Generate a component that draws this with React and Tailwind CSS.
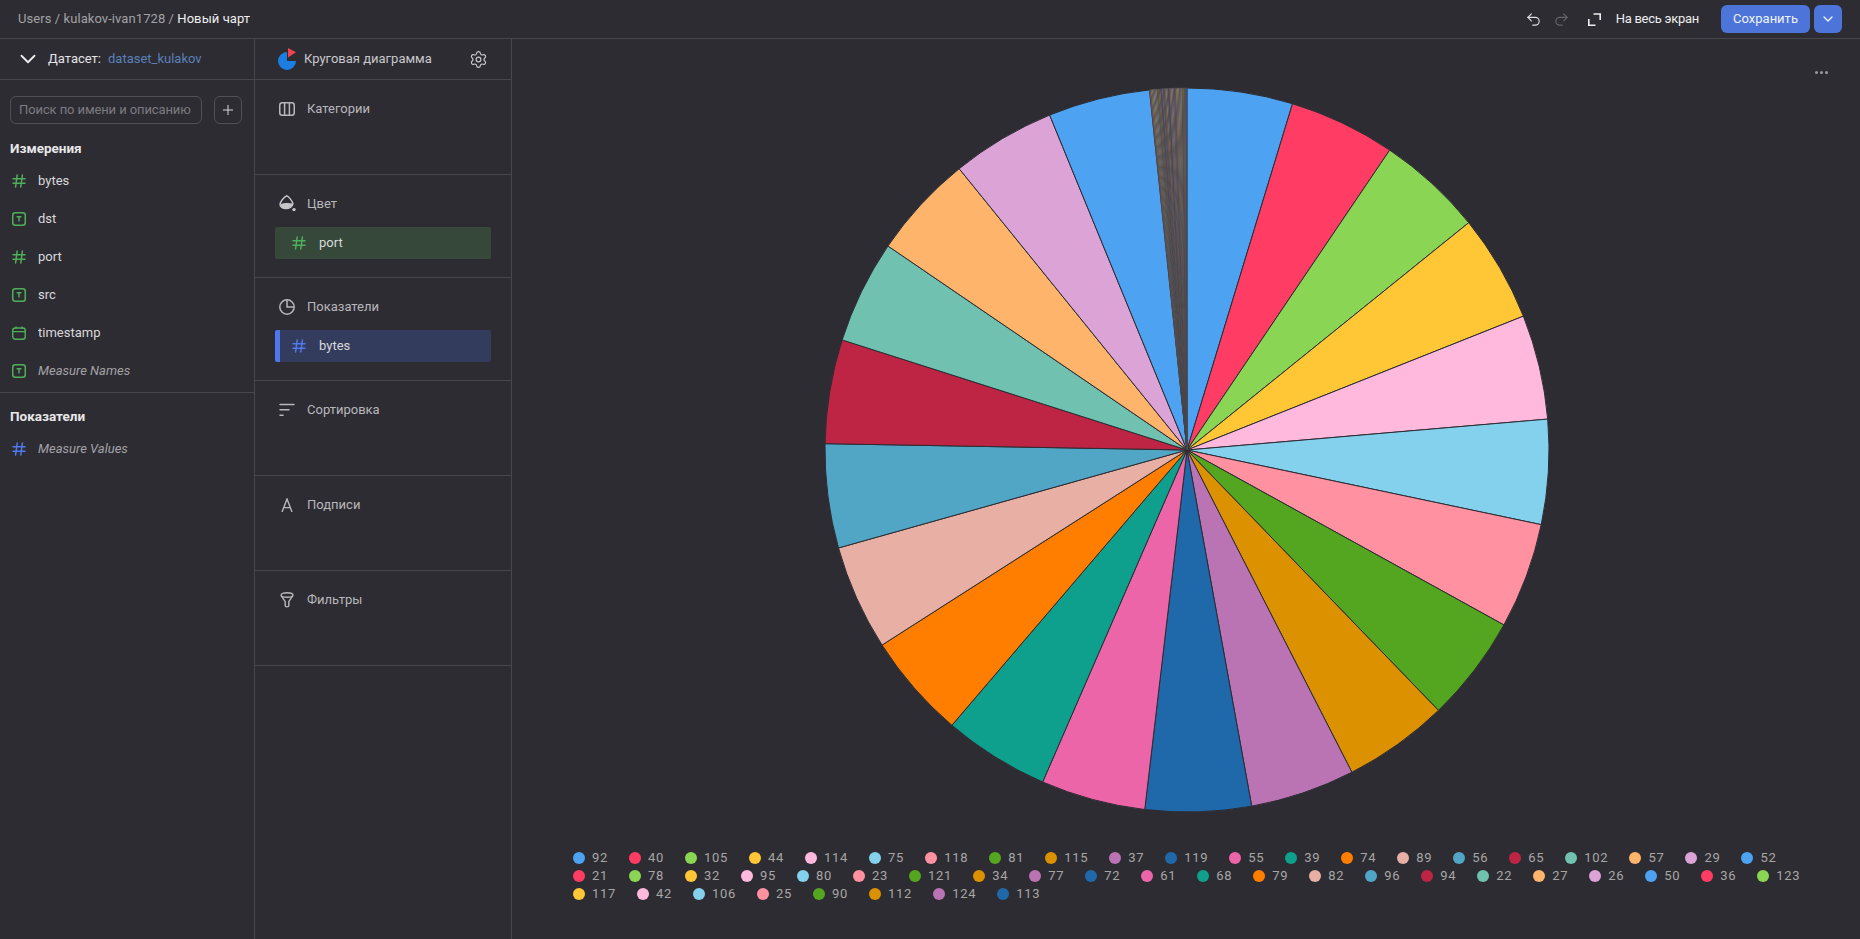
import React from "react";
import { ChevronDown, Plus, Redo2, Settings, Undo2 } from "lucide-react";

const COLORS = [
  "#4DA2F1", "#FF3D64", "#8AD554", "#FFC636", "#FFB9DD", "#84D1EE", "#FF91A1", "#54A520", "#DB9100", "#BA74B3",
  "#1F68A9", "#ED65A9", "#0FA08D", "#FF7E00", "#E8B0A4", "#52A6C5", "#BE2443", "#70C1AF", "#FFB46C", "#DCA3D7",
];

const LEGEND_ROWS = [
  [92, 40, 105, 44, 114, 75, 118, 81, 115, 37, 119, 55, 39, 74, 89, 56, 65, 102, 57, 29, 52],
  [21, 78, 32, 95, 80, 23, 121, 34, 77, 72, 61, 68, 79, 82, 96, 94, 22, 27, 26, 50, 36, 123],
  [117, 42, 106, 25, 90, 112, 124, 113],
];

// where each of the big slices ends, in degrees clockwise from the top
const SLICE_ENDS = [
  16.95, 34.05, 51.1, 68.3, 85.1, 101.9, 118.9, 136, 152.9, 169.7, 186.7,
  203.5, 220.5, 237.4, 254.3, 271, 287.7, 304.3, 321, 337.7, 354.05,
];

function slicePath(start, end, r) {
  const c = r + 1;
  const toXY = (deg) => {
    const a = (deg * Math.PI) / 180;
    return `${(c + r * Math.sin(a)).toFixed(3)} ${(c - r * Math.cos(a)).toFixed(3)}`;
  };
  return `M${c} ${c}L${toXY(start)}A${r} ${r} 0 0 1 ${toXY(end)}Z`;
}

function PieChart() {
  const ports = LEGEND_ROWS.flat();
  const tailAngle = (360 - SLICE_ENDS[SLICE_ENDS.length - 1]) / (ports.length - SLICE_ENDS.length);
  let angle = 0;
  const slices = ports.map((port, i) => {
    const big = i < SLICE_ENDS.length;
    const end = big ? SLICE_ENDS[i] : angle + tailAngle;
    const d = slicePath(angle, end, 362);
    angle = end;
    return <path key={port} d={d} fill={COLORS[i % 20]} stroke={big ? "#2d2c33" : "#4a484c"} strokeWidth={big ? 1 : 0.8} />;
  });
  return (
    <svg width="726" height="726" viewBox="0 0 726 726">
      {slices}
    </svg>
  );
}

function HashIcon({ color }) {
  return (
    <svg width="14" height="14" viewBox="0 0 14 14" fill="none" stroke={color} strokeWidth="1.5" strokeLinecap="round">
      <path d="M1 4.7h12M1 9.3h12M5.2 1 3.6 13M10.4 1 8.8 13" />
    </svg>
  );
}

function TextIcon() {
  return (
    <svg width="14" height="14" viewBox="0 0 14 14" fill="none" stroke="#4fae59" strokeWidth="1.5">
      <rect x="0.75" y="0.75" width="12.5" height="12.5" rx="2.5" />
      <path d="M4.6 4.8h4.8M7 4.8v4.6" strokeWidth="1.4" />
    </svg>
  );
}

function DateIcon() {
  return (
    <svg width="14" height="14" viewBox="0 0 14 14" fill="none" stroke="#4fae59" strokeWidth="1.4">
      <rect x="0.75" y="2" width="12.5" height="11.25" rx="2.5" />
      <path d="M1 5.6h12M4 0.5v2.5M10 0.5v2.5" />
    </svg>
  );
}

function PieTypeIcon() {
  return (
    <svg width="20" height="22" viewBox="0 0 20 22" className="shrink-0">
      <path d="M9 4a9 9 0 1 0 9 9H9Z" fill="#1b7ee0" />
      <path d="M10 0v9.5l8-5.2Z" fill="#f0444f" />
    </svg>
  );
}

function ColumnsIcon() {
  return (
    <svg width="16" height="14" viewBox="0 0 16 14" fill="none" stroke="#b8b7ba" strokeWidth="1.5">
      <rect x="0.75" y="0.75" width="14.5" height="12.5" rx="2.5" />
      <path d="M5.6 1v12M10.4 1v12" />
    </svg>
  );
}

function BucketIcon() {
  return (
    <svg width="17" height="17" viewBox="0 0 17 17" fill="none" stroke="#c6c5c8" strokeWidth="1.4">
      <path d="M7.5 0.8C9.4 1.2 13 5.4 14 8.6c-.4 2.8-3.4 5-7 5-3.4 0-6.2-1.8-6-4.2C1.3 6.4 5 2.2 7.5.8Z" strokeLinejoin="round" />
      <path d="M1.4 9.2c3.4-1.4 8.6-1.4 12.4-.6-.4 2.8-3.4 4.8-6.8 4.8-3.4 0-5.8-1.8-5.6-4.2Z" fill="#c6c5c8" stroke="none" />
      <circle cx="15" cy="14.6" r="1.7" fill="#c6c5c8" stroke="none" />
    </svg>
  );
}

function ClockPieIcon() {
  return (
    <svg width="16" height="16" viewBox="0 0 16 16" fill="none" stroke="#b8b7ba" strokeWidth="1.5">
      <circle cx="8" cy="8" r="7.2" />
      <path d="M8 1v7h7" />
    </svg>
  );
}

function SortIcon() {
  return (
    <svg width="16" height="14" viewBox="0 0 16 14" fill="none" stroke="#b8b7ba" strokeWidth="1.5" strokeLinecap="round">
      <path d="M1 1.5h14M1 6.8h9M1 12.2h3" />
    </svg>
  );
}

function LabelIcon() {
  return (
    <svg width="12" height="14" viewBox="0 0 12 14" fill="none" stroke="#b8b7ba" strokeWidth="1.4">
      <path d="M1 14 6 1l5 13M2.6 9.6h6.8" />
    </svg>
  );
}

function FunnelIcon() {
  return (
    <svg width="14" height="16" viewBox="0 0 14 16" fill="none" stroke="#b8b7ba" strokeWidth="1.4">
      <ellipse cx="7" cy="3" rx="6" ry="2.2" />
      <path d="M1.2 3.6 5.2 9.6v4.2c0 1.4 3.6 1.4 3.6 0V9.6l4-6" />
    </svg>
  );
}

function FullscreenIcon() {
  return (
    <svg width="13" height="13" viewBox="0 0 13 13" fill="none" stroke="#eeeeee" strokeWidth="1.6" className="block">
      <path d="M5.5 1h6.7v6M.8 6v6.2h6.7" />
    </svg>
  );
}

function FieldRow({ icon, label, italic }) {
  return (
    <div className="flex h-[38px] items-center pl-[12px]">
      <span className="flex w-[26px] shrink-0">{icon}</span>
      <span className={italic ? "text-[13px] italic text-[#a3a2a5]" : "text-[13px] text-[#d9d8da]"}>{label}</span>
    </div>
  );
}

function Section({ icon, title, children }) {
  return (
    <div className={`border-b border-[#48474d] ${children ? "h-[103px]" : "h-[95px]"}`}>
      <div className="flex h-[52px] items-center pt-[5px]">
        <span className="flex w-[52px] shrink-0 justify-center pl-[12px]">{icon}</span>
        <span className="text-[13px] text-[#b8b7ba]">{title}</span>
      </div>
      {children}
    </div>
  );
}

function LegendItem({ port, color }) {
  return (
    <div className="mr-[21px] flex h-[18px] items-center gap-[7px]">
      <span className="h-[12px] w-[12px] rounded-full" style={{ backgroundColor: color }} />
      <span className="text-[13px] tracking-[0.7px] text-[#a8a6a5]">{port}</span>
    </div>
  );
}

export default function App() {
  let legendIndex = 0;
  return (
    <div className="flex h-[939px] w-[1860px] flex-col overflow-hidden bg-[#2d2c33] font-['Roboto',sans-serif] text-[13px] text-[#d9d8da]">
      <header className="flex h-[39px] shrink-0 items-center border-b border-[#48474d] pl-[18px] pr-[18px]">
        <div className="flex-1 text-[13px] tracking-[0.07px] text-[#a3a2a5]">
          Users / kulakov-ivan1728 / <span className="text-[#f0eff0]">Новый чарт</span>
        </div>
        <Undo2 size={17} color="#e0e0e0" strokeWidth={1.6} />
        <Redo2 size={17} color="#666569" strokeWidth={1.6} className="ml-[11px]" />
        <span className="ml-[18px]">
          <FullscreenIcon />
        </span>
        <span className="ml-[15px] text-[13px] tracking-[-0.27px] text-[#eeeeee]">На весь экран</span>
        <button className="ml-[22px] h-[28px] w-[89px] rounded-[6px] bg-[#4d75d9] text-[13px] text-[#f0f3fb]">Сохранить</button>
        <button className="ml-[4px] flex h-[28px] w-[28px] items-center justify-center rounded-[6px] bg-[#4d75d9]">
          <ChevronDown size={16} color="#f0f3fb" />
        </button>
      </header>

      <div className="flex min-h-0 flex-1">
        <aside className="w-[255px] shrink-0 border-r border-[#48474d]">
          <div className="flex h-[41px] items-center border-b border-[#48474d] pl-[15px]">
            <ChevronDown size={26} color="#ededed" strokeWidth={1.7} />
            <span className="ml-[7px] text-[13px] text-[#e4e3e5]">Датасет:</span>
            <span className="ml-[7px] text-[13px] text-[#5a80b8]">dataset_kulakov</span>
          </div>
          <div className="flex gap-[12px] pl-[10px] pt-[16px]">
            <div className="flex h-[28px] w-[192px] items-center whitespace-nowrap rounded-[6px] border border-[#514f57] pl-[8px] text-[13px] tracking-[-0.1px] text-[#7c7b80]">
              Поиск по имени и описанию
            </div>
            <div className="flex h-[28px] w-[28px] items-center justify-center rounded-[6px] border border-[#514f57]">
              <Plus size={16} color="#d9d8da" strokeWidth={1.5} />
            </div>
          </div>
          <div className="pb-[4px] pl-[10px] pt-[14px] text-[13.5px] font-bold leading-[20px] text-[#e8e7e9]">Измерения</div>
          <div className="border-b border-[#48474d] pb-[2px]">
            <FieldRow icon={<HashIcon color="#4fae59" />} label="bytes" />
            <FieldRow icon={<TextIcon />} label="dst" />
            <FieldRow icon={<HashIcon color="#4fae59" />} label="port" />
            <FieldRow icon={<TextIcon />} label="src" />
            <FieldRow icon={<DateIcon />} label="timestamp" />
            <FieldRow icon={<TextIcon />} label="Measure Names" italic />
          </div>
          <div className="pb-[4px] pl-[10px] pt-[13px] text-[13.5px] font-bold leading-[20px] text-[#e8e7e9]">Показатели</div>
          <FieldRow icon={<HashIcon color="#5279ee" />} label="Measure Values" italic />
        </aside>

        <section className="w-[257px] shrink-0 border-r border-[#48474d]">
          <div className="flex h-[41px] items-center border-b border-[#48474d] pl-[23px] pr-[23px]">
            <PieTypeIcon />
            <span className="ml-[6px] flex-1 text-[13px] text-[#c8c7ca]">Круговая диаграмма</span>
            <Settings size={19} color="#c8c7ca" strokeWidth={1.5} />
          </div>
          <Section icon={<ColumnsIcon />} title="Категории" />
          <Section icon={<BucketIcon />} title="Цвет">
            <div className="ml-[20px] flex h-[32px] w-[216px] items-center rounded-[2px] bg-[#35483a] pl-[17px]">
              <HashIcon color="#4fae59" />
              <span className="ml-[13px] text-[13px] text-[#d9d8da]">port</span>
            </div>
          </Section>
          <Section icon={<ClockPieIcon />} title="Показатели">
            <div className="ml-[20px] flex h-[32px] w-[216px] items-center rounded-[2px] border-l-[5px] border-[#4f78ee] bg-[#333c5c] pl-[12px]">
              <HashIcon color="#5279ee" />
              <span className="ml-[13px] text-[13px] text-[#d9d8da]">bytes</span>
            </div>
          </Section>
          <Section icon={<SortIcon />} title="Сортировка" />
          <Section icon={<LabelIcon />} title="Подписи" />
          <Section icon={<FunnelIcon />} title="Фильтры" />
        </section>

        <main className="relative min-w-0 flex-1 pt-[48px]">
          <div className="absolute right-[32px] top-[32px] flex gap-[2px]">
            <span className="h-[3px] w-[3px] rounded-full bg-[#9a999d]" />
            <span className="h-[3px] w-[3px] rounded-full bg-[#9a999d]" />
            <span className="h-[3px] w-[3px] rounded-full bg-[#9a999d]" />
          </div>
          <div className="flex justify-center pl-[1px]">
            <PieChart />
          </div>
          <div className="mt-[36px] pl-[61px]">
            {LEGEND_ROWS.map((row) => (
              <div key={row[0]} className="flex">
                {row.map((port) => {
                  const color = COLORS[legendIndex++ % 20];
                  return <LegendItem key={port} port={port} color={color} />;
                })}
              </div>
            ))}
          </div>
        </main>
      </div>
    </div>
  );
}
